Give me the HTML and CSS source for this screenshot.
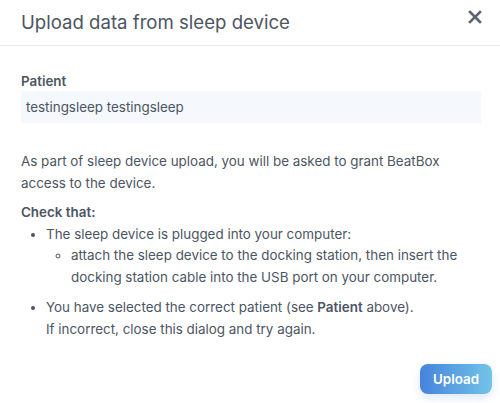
FILE: index.html
```html
<!DOCTYPE html>
<html>
<head>
<meta charset="utf-8">
<link rel="stylesheet" href="styles.css">
</head>
<body>
<div class="dialog">
  <div class="header">
    <h1 class="title">Upload data from sleep device</h1>
    <button class="close" aria-label="Close">
      <svg width="14" height="14" viewBox="0 0 14 14"><path d="M2 2 L12 12 M12 2 L2 12" stroke="#5b6471" stroke-width="2.6" stroke-linecap="square" fill="none"/></svg>
    </button>
  </div>
  <div class="content">
    <div class="label">Patient</div>
    <div class="field">testingsleep testingsleep</div>
    <p class="info">As part of sleep device upload, you will be asked to grant BeatBox access to the device.</p>
    <div class="check">Check that:</div>
    <ul class="list">
      <li>The sleep device is plugged into your computer:
        <ul class="sublist">
          <li>attach the sleep device to the docking station, then insert the docking station cable into the USB port on your computer.</li>
        </ul>
      </li>
      <li>You have selected the correct patient (see <b>Patient</b> above).<br>If incorrect, close this dialog and try again.</li>
    </ul>
  </div>
  <div class="footer">
    <button class="upload">Upload</button>
  </div>
</div>
</body>
</html>
```
FILE: styles.css
```css
html, body {
  margin: 0;
  padding: 0;
  background: #ffffff;
}
body {
  font-family: Inter, "Noto Sans", sans-serif;
  color: #4b5563;
  font-size: 13.4px;
}
.dialog {
  width: 500px;
  height: 403px;
  display: flex;
  flex-direction: column;
}
.header {
  display: flex;
  align-items: center;
  justify-content: space-between;
  height: 46px;
  box-sizing: border-box;
  padding: 0 18px 6px 21px;
  border-bottom: 1px solid #e9ebee;
}
.title {
  margin: 0;
  font-size: 18.6px;
  font-weight: 400;
  line-height: 24px;
  color: #4d5562;
  margin-top: 4px;
}
.close {
  border: 0;
  background: none;
  padding: 0;
  width: 14px;
  height: 14px;
  display: flex;
  margin-top: -6px;
}
.content {
  padding: 25px 19px 0 21px;
}
.label {
  font-weight: 600;
  line-height: 20px;
  color: #4b5563;
}
.field {
  height: 32px;
  line-height: 32px;
  background: #f5f8fc;
  padding-left: 5px;
  color: #4b5563;
}
.info {
  margin: 28px 0 0;
  line-height: 21.5px;
}
.check {
  margin-top: 8px;
  font-weight: 600;
  line-height: 21.5px;
}
.list {
  margin: 0;
  padding-left: 25px;
  line-height: 21.5px;
}
.list > li + li {
  margin-top: 9px;
}
.sublist {
  margin: 0;
  padding-left: 25px;
  list-style-type: circle;
}
.list b {
  font-weight: 600;
}
.footer {
  display: flex;
  justify-content: flex-end;
  padding: 24px 8px 0 0;
}
.upload {
  width: 72px;
  height: 30px;
  border: 0;
  border-radius: 8px;
  background: linear-gradient(90deg, #4683dc 0%, #72c4e9 100%);
  color: #ffffff;
  font-family: Inter, "Noto Sans", sans-serif;
  font-size: 13.4px;
  font-weight: 600;
  box-shadow: 0 4px 10px rgba(70, 131, 220, 0.18);
}
```
